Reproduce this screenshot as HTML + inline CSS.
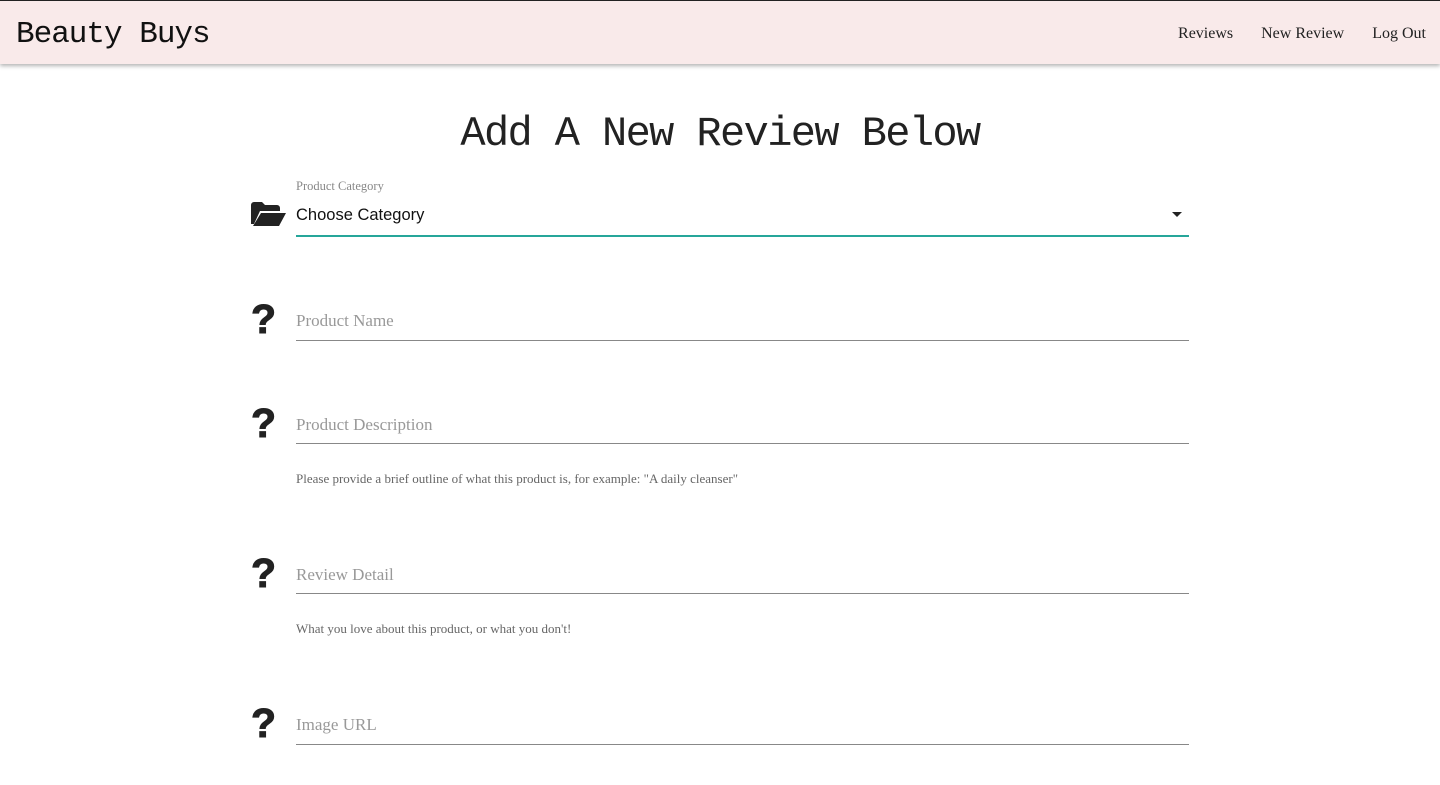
<!DOCTYPE html>
<html><head><style>
body{margin:0;background:#fff;font-family:"Liberation Serif",serif;width:1440px;height:785px;overflow:hidden;position:relative}
.nav{position:absolute;left:0;top:0;width:1440px;height:64px;background:#f9eaea;border-top:1px solid #222;box-shadow:0 2px 4px rgba(0,0,0,.3);box-sizing:border-box}
.logo{position:absolute;left:16px;top:16px;font-family:"Liberation Mono",monospace;font-size:31px;color:#111;letter-spacing:-1px}
.links{position:absolute;right:14px;top:24px;font-size:16px;color:#222}
.links span{margin-left:28px}
h1{position:absolute;left:0;width:1440px;top:110px;margin:0;text-align:center;font-family:"Liberation Mono",monospace;font-weight:normal;font-size:42px;color:#222;letter-spacing:-1.6px}
.f{position:absolute;left:296px;width:893px;border-bottom:1px solid #888}
.ph{font-size:17px;color:#999;position:absolute;left:0;top:3px}
.q{position:absolute;left:251px;font-family:"Liberation Sans",sans-serif;font-weight:900;font-size:41px;color:#222;-webkit-text-stroke:1px #222}
.help{position:absolute;left:296px;font-size:13px;color:#666}
</style></head><body>
<div class="nav"><div class="logo">Beauty Buys</div><div class="links"><span>Reviews</span><span>New Review</span><span>Log Out</span></div></div>
<h1>Add A New Review Below</h1>
<div style="position:absolute;left:296px;top:179px;font-size:12.5px;color:#888">Product Category</div>
<svg style="position:absolute;left:251px;top:202px" width="35" height="24" viewBox="0 0 35 24"><path d="M0 3a3 3 0 0 1 3-3h8l3 3h12a3 3 0 0 1 3 3v3H9L3 22H0z M10 11h25l-7 13H2z" fill="#222"/></svg>
<div style="position:absolute;left:296px;top:206px;font-family:'Liberation Sans',sans-serif;font-size:16.5px;color:#111">Choose Category</div>
<div style="position:absolute;left:1172px;top:212px;border:5px solid transparent;border-top-color:#222;border-bottom:0"></div>
<div style="position:absolute;left:296px;top:235px;width:893px;height:2px;background:#26a69a"></div>
<div class="q" style="top:296px">?</div><div class="f" style="top:308px;height:32px"><span class="ph">Product Name</span></div>
<div class="q" style="top:400px">?</div><div class="f" style="top:412px;height:31px"><span class="ph">Product Description</span></div>
<div class="help" style="top:471px">Please provide a brief outline of what this product is, for example: "A daily cleanser"</div>
<div class="q" style="top:550px">?</div><div class="f" style="top:562px;height:31px"><span class="ph">Review Detail</span></div>
<div class="help" style="top:621px">What you love about this product, or what you don't!</div>
<div class="q" style="top:700px">?</div><div class="f" style="top:712px;height:32px"><span class="ph">Image URL</span></div>
</body></html>
